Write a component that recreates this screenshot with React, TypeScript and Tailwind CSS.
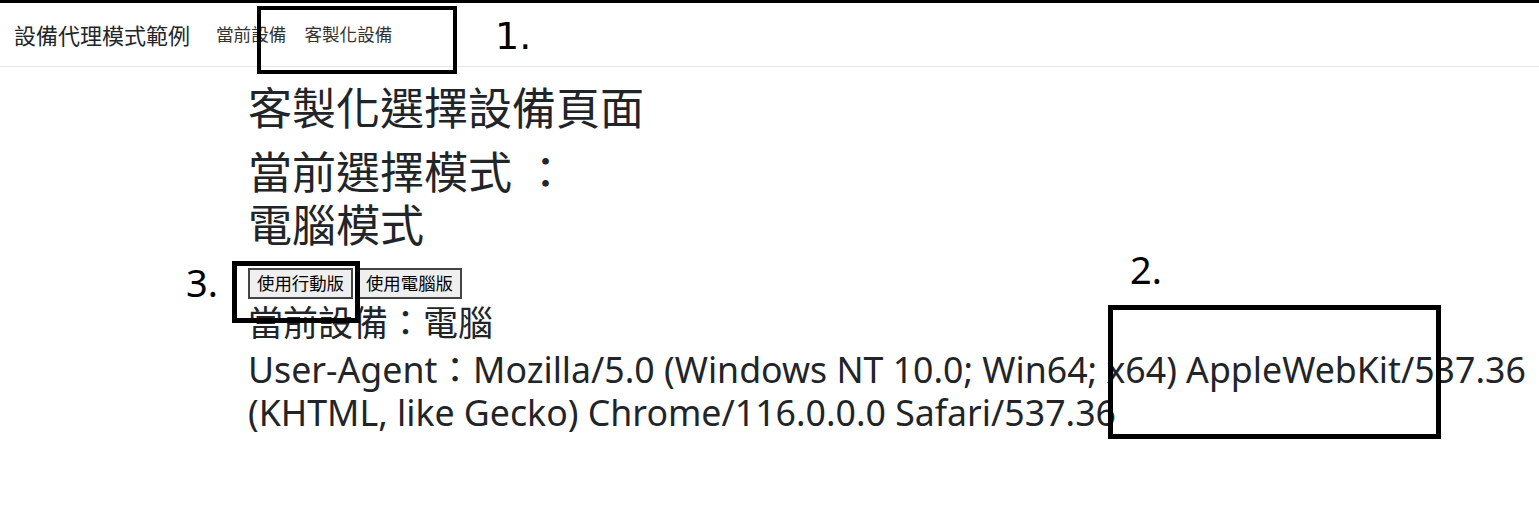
const font = {
  fontFamily: '"Noto Sans", "Noto Sans CJK TC", sans-serif',
};

const userAgent =
  "Mozilla/5.0 (Windows NT 10.0; Win64; x64) AppleWebKit/537.36 (KHTML, like Gecko) Chrome/116.0.0.0 Safari/537.36";

function Navbar() {
  return (
    <nav className="flex h-[64px] items-center border-b border-[#e4e4ec] bg-white pl-[14px]">
      <a className="text-[22px] leading-none text-[#212529]">設備代理模式範例</a>
      <ul className="ml-[26px] flex gap-[18px] text-[17.6px] leading-none text-[#333]">
        <li>當前設備</li>
        <li>客製化設備</li>
      </ul>
    </nav>
  );
}

// the numbered boxes drawn over the screenshot
function Annotations() {
  return (
    <>
      <div className="absolute left-[257px] top-[3px] h-[68px] w-[200px] border-[4px] border-black" />
      <div className="absolute left-[495px] top-[14px] text-[38px] leading-none text-black" style={{ fontFamily: '"DejaVu Sans", sans-serif' }}>
        1.
      </div>
      <div className="absolute left-[1108px] top-[302px] h-[134px] w-[333px] border-[5px] border-black" />
      <div className="absolute left-[1130px] top-[247px] text-[38px] leading-none text-black">2.</div>
      <div className="absolute left-[232px] top-[258px] h-[62px] w-[128px] border-[5px] border-black" />
      <div className="absolute left-[186px] top-[260px] text-[38px] leading-none text-black">3.</div>
    </>
  );
}

export default function App() {
  return (
    <div className="relative min-h-[507px] border-t-[3px] border-black bg-white text-[#212529]" style={font}>
      <Navbar />
      <main className="pl-[248px] pr-[8px] pt-[15px]">
        <h1 className="mb-[11px] text-[44px] leading-[1.2]">客製化選擇設備頁面</h1>
        <h1 className="text-[44px] leading-[1.2]">
          當前選擇模式 ：
          <br />
          電腦模式
        </h1>
        <div className="mt-[17px] flex gap-[4px]">
          <button className="h-[31px] border-2 border-[#444] bg-[#efefef] px-[7px] text-[17.4px] leading-none text-black">使用行動版</button>
          <button className="h-[31px] border-2 border-[#444] bg-[#efefef] px-[7px] text-[17.4px] leading-none text-black">使用電腦版</button>
        </div>
        <h2 className="mt-[3px] text-[35px] leading-[1.2]">當前設備：電腦</h2>
        <h2 className="mt-[4px] text-[35.7px] leading-[1.18]">User-Agent：{userAgent}</h2>
      </main>
      <Annotations />
    </div>
  );
}
